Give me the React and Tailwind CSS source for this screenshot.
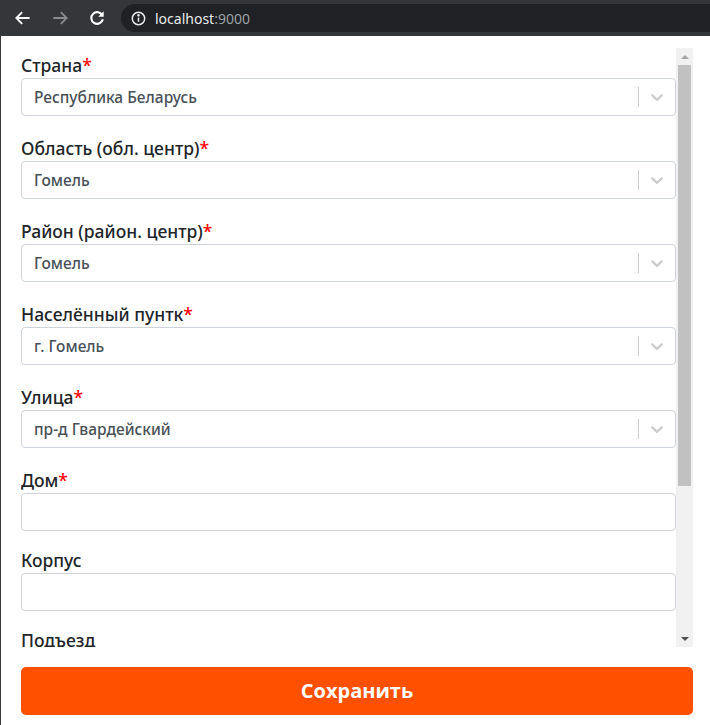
import React from 'react';

const Chevron = () => (
  <svg viewBox="0 0 20 20" className="w-5 h-5 fill-[#cccccc]">
    <path d="M4.516 7.548c0.436-0.446 1.043-0.481 1.576 0l3.908 3.747 3.908-3.747c0.533-0.481 1.141-0.446 1.574 0 0.436 0.445 0.408 1.197 0 1.615-0.406 0.418-4.695 4.502-4.695 4.502-0.217 0.223-0.502 0.335-0.787 0.335s-0.57-0.112-0.789-0.335c0 0-4.287-4.084-4.695-4.502s-0.436-1.17 0-1.615z" />
  </svg>
);

const Label = ({ text, required }) => (
  <label className="block text-[17.5px] font-medium leading-[24px] mb-[1px] text-[#212529] font-['Noto_Sans',sans-serif]">
    {text}
    {required && <span className="text-[#ff0000]">*</span>}
  </label>
);

const SelectField = ({ label, value }) => (
  <div className="mb-[20px]">
    <Label text={label} required />
    <div className="flex h-[38px] items-stretch border border-[#ced4da] rounded-[4px] bg-white">
      <div className="flex-1 flex items-center pl-3 pt-[1px] text-[15.5px] font-medium text-[#495057] font-['Noto_Sans',sans-serif]">{value}</div>
      <span className="w-px bg-[#cccccc] my-2" />
      <div className="flex items-center px-2">
        <Chevron />
      </div>
    </div>
  </div>
);

const InputField = ({ label, required }) => (
  <div className="mb-[17px]">
    <Label text={label} required={required} />
    <input className="block w-full h-[38px] border border-[#ced4da] rounded-[4px] px-3 outline-none" />
  </div>
);

const BrowserBar = () => (
  <div className="h-[36px] bg-[#35363a] flex items-center shrink-0">
    <div className="flex items-center gap-[17px] pl-[13px] pr-[14px]">
      <svg viewBox="0 0 24 24" className="w-[20px] h-[20px]" fill="none" stroke="#ffffff" strokeWidth="2.2">
        <path d="M20 12H5M11 5l-7 7 7 7" />
      </svg>
      <svg viewBox="0 0 24 24" className="w-[20px] h-[20px]" fill="none" stroke="#8a8b8d" strokeWidth="2.2">
        <path d="M4 12h15M13 5l7 7-7 7" />
      </svg>
      <svg viewBox="0 0 24 24" className="w-[20px] h-[20px]" fill="none" stroke="#ffffff" strokeWidth="2.6">
        <path d="M18.5 9A7 7 0 1 0 19 13.5" />
        <path d="M20 4v6.5h-6.5z" fill="#ffffff" stroke="none" />
      </svg>
    </div>
    <div className="flex-1 h-[28px] bg-[#202124] rounded-l-full flex items-center pl-[10px]">
      <svg viewBox="0 0 16 16" className="w-[15px] h-[15px]" fill="none" stroke="#e8eaed" strokeWidth="1.6">
        <circle cx="8" cy="8" r="6.6" />
        <path d="M8 7v4.5" />
        <circle cx="8" cy="4.6" r="0.6" fill="#e8eaed" />
      </svg>
      <span className="ml-[9px] text-[14px] text-[#e8eaed] font-['Noto_Sans',sans-serif]">
        localhost<span className="text-[#9aa0a6]">:9000</span>
      </span>
    </div>
  </div>
);

const Scrollbar = () => (
  <div className="w-[17px] bg-[#f1f1f1] flex flex-col items-center shrink-0">
    <div className="h-[17px] flex items-center justify-center">
      <div className="w-0 h-0 border-l-[4px] border-r-[4px] border-b-[4px] border-l-transparent border-r-transparent border-b-[#a3a3a3]" />
    </div>
    <div className="w-[13px] h-[421px] bg-[#c1c1c1]" />
    <div className="flex-1" />
    <div className="h-[17px] flex items-center justify-center">
      <div className="w-0 h-0 border-l-[4px] border-r-[4px] border-t-[4px] border-l-transparent border-r-transparent border-t-[#505050]" />
    </div>
  </div>
);

export default function App() {
  return (
    <div className="w-[710px] h-[725px] flex flex-col bg-white font-['Open_Sans',sans-serif] overflow-hidden">
      <BrowserBar />
      <div className="flex-1 flex flex-col border-l border-[#3a3a3a] pl-[20px] pr-[17px] pt-[12px] pb-[10px]">
        <div className="h-[599px] flex">
          <div className="flex-1 overflow-hidden pt-[5px]">
            <SelectField label="Страна" value="Республика Беларусь" />
            <SelectField label="Область (обл. центр)" value="Гомель" />
            <SelectField label="Район (район. центр)" value="Гомель" />
            <SelectField label="Населённый пунтк" value="г. Гомель" />
            <SelectField label="Улица" value="пр-д Гвардейский" />
            <InputField label="Дом" required />
            <InputField label="Корпус" />
            <InputField label="Подъезд" />
          </div>
          <Scrollbar />
        </div>
        <button className="mt-[20px] h-[48px] w-full rounded-[5px] bg-[#ff5000] text-white text-[20px] font-bold">
          Сохранить
        </button>
      </div>
    </div>
  );
}
